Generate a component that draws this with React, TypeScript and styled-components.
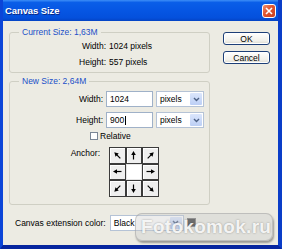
import React from "react";
import styled, { createGlobalStyle } from "styled-components";

const Global = createGlobalStyle`
  html, body { margin: 0; padding: 0; background: #fff; }
  body { font-family: "Liberation Sans", Arial, sans-serif; }
  * { box-sizing: border-box; }
`;

const Window = styled.div`
  width: 282px;
  height: 249px;
  display: flex;
  flex-direction: column;
  background: #0a3fd0;
  border-left: 3px solid #0b45d8;
  border-right: 4px solid #0a3dc8;
  border-bottom: 4px solid #06259f;
  overflow: hidden;
`;

const TitleBar = styled.div`
  height: 21px;
  margin-left: -3px;
  margin-right: -4px;
  padding: 0 6px 0 5px;
  display: flex;
  align-items: center;
  justify-content: space-between;
  background: linear-gradient(#3d8ef7 0%, #0a5ee8 12%, #0656e3 50%, #0450dc 85%, #0443c4 100%);
`;

const Title = styled.span`
  color: #fff;
  font-weight: bold;
  font-size: 9.5px;
  letter-spacing: -0.1px;
  text-shadow: 1px 1px 0 #0a2a88;
`;

const CloseBtn = styled.div`
  width: 14px;
  height: 14px;
  border: 1px solid #fff;
  border-radius: 3px;
  background: linear-gradient(135deg, #f08e6e 0%, #e0542f 45%, #c8401e 100%);
  display: flex;
  align-items: center;
  justify-content: center;
`;

const Body = styled.div`
  position: relative;
  flex: 1;
  background: #ecebe3;
  display: flex;
  padding: 6px 0 0 6px;
  gap: 13px;
`;

const LeftCol = styled.div`
  width: 201px;
  display: flex;
  flex-direction: column;
`;

const Group = styled.fieldset<{ $top?: number; $pt: number; $pb: number }>`
  margin: ${(p) => p.$top ?? 0}px 0 0 0;
  padding: ${(p) => p.$pt}px 0 ${(p) => p.$pb}px 0;
  border: 1px solid #cfcfc4;
  border-radius: 3px;
  min-width: 0;
`;

const Legend = styled.legend`
  margin-left: 9px;
  padding: 0 3px;
  font-size: 8.5px;
  line-height: 10px;
  color: #1a4fc8;
`;

const InfoRow = styled.div`
  display: grid;
  grid-template-columns: 96px auto;
  column-gap: 3px;
  height: 16px;
  align-items: center;
  font-size: 8.5px;
  color: #000;
`;

const Label = styled.span<{ $w?: number }>`
  text-align: right;
  font-size: 8.5px;
  color: #000;
  ${(p) => (p.$w ? `width: ${p.$w}px;` : "")}
`;

const FormRow = styled.div<{ $mt: number }>`
  display: flex;
  align-items: center;
  gap: 3px;
  margin-top: ${(p) => p.$mt}px;
`;

const Input = styled.div`
  width: 47px;
  height: 16px;
  border: 1px solid #9fb1c8;
  background: #fff;
  font-size: 8.5px;
  display: flex;
  align-items: center;
  padding-left: 3px;
`;

const Caret = styled.span`
  display: inline-block;
  width: 1px;
  height: 9px;
  background: #000;
  margin-left: 0.5px;
`;

const Select = styled.div<{ $w: number }>`
  width: ${(p) => p.$w}px;
  height: 16px;
  border: 1px solid #b5c3d6;
  background: #fff;
  display: flex;
  align-items: stretch;
  font-size: 8.5px;
`;

const SelectText = styled.span`
  flex: 1;
  display: flex;
  align-items: center;
  padding-left: 3px;
`;

const SelectArrow = styled.span`
  width: 12px;
  margin: 1px;
  background: linear-gradient(#dbe6fc, #bccff5);
  border-radius: 1px;
  display: flex;
  align-items: center;
  justify-content: center;
`;

const CheckRow = styled.label`
  display: flex;
  align-items: center;
  gap: 2px;
  margin-top: 3px;
  padding-left: 80px;
  height: 10px;
  font-size: 8.5px;
`;

const CheckBox = styled.span`
  width: 8px;
  height: 8px;
  border: 1px solid #7a8696;
  background: #fff;
`;

const AnchorRow = styled.div`
  display: flex;
  align-items: flex-start;
  gap: 9px;
  margin-top: 6px;
`;

const AnchorLabel = styled(Label)`
  line-height: 12px;
`;

const Grid = styled.div`
  display: grid;
  grid-template-columns: repeat(3, 16.5px);
  grid-template-rows: repeat(3, 16.5px);
`;

const Cell = styled.div<{ $center?: boolean }>`
  border: 1px solid ${(p) => (p.$center ? "#e4e4e4" : "#3b3b3b")};
  background: ${(p) => (p.$center ? "#ffffff" : "#efefef")};
  box-shadow: ${(p) => (p.$center ? "none" : "inset 1px 1px 0 #fff")};
  display: flex;
  align-items: center;
  justify-content: center;
`;

const ExtRow = styled.div`
  display: flex;
  align-items: center;
  margin-top: 10px;
  padding-left: 6px;
  gap: 4px;
`;

const Swatch = styled.span`
  width: 9px;
  height: 9px;
  margin-left: -1px;
  background: #3c3c3c;
  border: 1px solid #777;
`;

const RightCol = styled.div`
  display: flex;
  flex-direction: column;
  gap: 6px;
  padding-top: 5px;
`;

const Button = styled.div`
  width: 47px;
  height: 13px;
  border: 1px solid #1d3f78;
  border-radius: 3px;
  background: linear-gradient(#ffffff, #f1f0ea 70%, #dcdad0);
  box-shadow: inset 0 0 0 1px #fff;
  font-size: 8.5px;
  display: flex;
  align-items: center;
  justify-content: center;
  color: #000;
`;

const Watermark = styled.div`
  position: absolute;
  left: 132px;
  top: 192px;
  width: 138px;
  height: 28px;
  border-radius: 7px;
  background: rgba(200, 200, 200, 0.35);
  box-shadow: 1px 2px 2px rgba(0, 0, 0, 0.35), inset 0 0 0 1px rgba(150, 150, 150, 0.45);
  display: flex;
  align-items: center;
  padding-left: 6px;
  font-family: "Liberation Sans", Arial, sans-serif;
  font-weight: bold;
  font-size: 19px;
  letter-spacing: 0.3px;
  color: rgba(255, 255, 255, 0.9);
  text-shadow: 0 0 2px rgba(0, 0, 0, 0.35);
`;

const Chevron = () => (
  <svg width="7" height="5" viewBox="0 0 7 5">
    <path d="M1 1 L3.5 3.5 L6 1" fill="none" stroke="#4d6185" strokeWidth="1.4" />
  </svg>
);

const arrowAngles: (number | null)[] = [-135, -90, -45, 180, null, 0, 135, 90, 45];

const Arrow = ({ angle }: { angle: number }) => (
  <svg width="11" height="11" viewBox="-5.5 -5.5 11 11">
    <g transform={`rotate(${angle})`}>
      <line x1="-4" y1="0" x2="2" y2="0" stroke="#000" strokeWidth="1.2" />
      <polygon points="4.5,0 0.5,-2.3 0.5,2.3" fill="#000" />
    </g>
  </svg>
);

export default function App() {
  return (
    <>
      <Global />
      <Window>
        <TitleBar>
          <Title>Canvas Size</Title>
          <CloseBtn>
            <svg width="8" height="8" viewBox="0 0 8 8">
              <path d="M1 1 L7 7 M7 1 L1 7" stroke="#fff" strokeWidth="1.6" />
            </svg>
          </CloseBtn>
        </TitleBar>
        <Body>
          <LeftCol>
            <Group $pt={1} $pb={2}>
              <Legend>Current Size: 1,63M</Legend>
              <InfoRow>
                <Label>Width:</Label>
                <span>1024 pixels</span>
              </InfoRow>
              <InfoRow>
                <Label>Height:</Label>
                <span>557 pixels</span>
              </InfoRow>
            </Group>
            <Group $top={3} $pt={0} $pb={7}>
              <Legend>New Size: 2,64M</Legend>
              <FormRow $mt={5}>
                <Label $w={93}>Width:</Label>
                <Input>1024</Input>
                <Select $w={48}>
                  <SelectText>pixels</SelectText>
                  <SelectArrow>
                    <Chevron />
                  </SelectArrow>
                </Select>
              </FormRow>
              <FormRow $mt={5}>
                <Label $w={93}>Height:</Label>
                <Input>
                  900<Caret />
                </Input>
                <Select $w={48}>
                  <SelectText>pixels</SelectText>
                  <SelectArrow>
                    <Chevron />
                  </SelectArrow>
                </Select>
              </FormRow>
              <CheckRow>
                <CheckBox />
                Relative
              </CheckRow>
              <AnchorRow>
                <AnchorLabel $w={90}>Anchor:</AnchorLabel>
                <Grid>
                  {arrowAngles.map((a, i) => (
                    <Cell key={i} $center={a === null}>
                      {a !== null && <Arrow angle={a} />}
                    </Cell>
                  ))}
                </Grid>
              </AnchorRow>
            </Group>
            <ExtRow>
              <Label>Canvas extension color:</Label>
              <Select $w={74}>
                <SelectText>Black</SelectText>
                <SelectArrow>
                  <Chevron />
                </SelectArrow>
              </Select>
              <Swatch />
            </ExtRow>
          </LeftCol>
          <RightCol>
            <Button>OK</Button>
            <Button>Cancel</Button>
          </RightCol>
          <Watermark>Fotokomok.ru</Watermark>
        </Body>
      </Window>
    </>
  );
}
